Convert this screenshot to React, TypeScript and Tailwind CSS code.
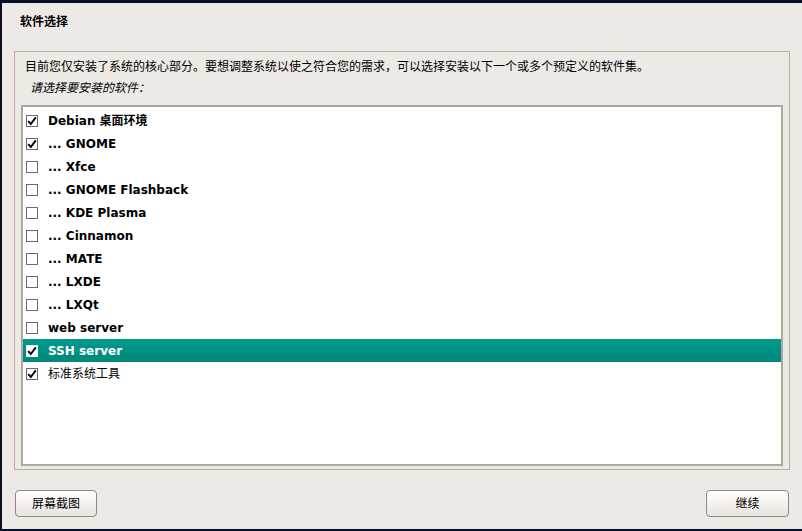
import React from 'react';

const font = { fontFamily: '"DejaVu Sans", "Noto Sans CJK SC", sans-serif' };

const items = [
  { label: 'Debian 桌面环境', checked: true, bold: true },
  { label: '... GNOME', checked: true, bold: true },
  { label: '... Xfce', checked: false, bold: true },
  { label: '... GNOME Flashback', checked: false, bold: true },
  { label: '... KDE Plasma', checked: false, bold: true },
  { label: '... Cinnamon', checked: false, bold: true },
  { label: '... MATE', checked: false, bold: true },
  { label: '... LXDE', checked: false, bold: true },
  { label: '... LXQt', checked: false, bold: true },
  { label: 'web server', checked: false, bold: true },
  { label: 'SSH server', checked: true, bold: true, selected: true },
  { label: '标准系统工具', checked: true, bold: false },
];

function CheckBox({ checked, selected }: { checked: boolean; selected?: boolean }) {
  return (
    <div
      className={`w-[12px] h-[12px] border flex items-center justify-center ${
        selected ? 'bg-white border-[#e6f2ef]' : 'bg-white border-[#6e6962]'
      }`}
    >
      {checked && (
        <svg width="10" height="10" viewBox="0 0 10 10">
          <path d="M1.2 5.2 L3.8 8 L8.8 1.4" fill="none" stroke="#000" strokeWidth="1.9" />
        </svg>
      )}
    </div>
  );
}

export default function App() {
  return (
    <div className="w-[802px] h-[531px] bg-[#0a0d26] pt-[3px] pl-[2px] pb-[2px] overflow-hidden" style={font}>
      <div className="h-full bg-[#edeae5] flex flex-col text-[#000]">
        {/* Title */}
        <div className="h-[48px] pl-[18px] pt-[11px] text-[12px] font-bold leading-[16px]">软件选择</div>

        {/* Group box */}
        <div className="ml-[12px] w-[776px] h-[419px] border border-[#b6afa5] flex flex-col">
          <div className="pl-[10px] pt-[7px] text-[12px] leading-[16px]">
            目前您仅安装了系统的核心部分。要想调整系统以使之符合您的需求，可以选择安装以下一个或多个预定义的软件集。
          </div>
          <div className="pl-[15px] mt-[5px] text-[12px] leading-[16px] italic">请选择要安装的软件：</div>

          <div className="ml-[6px] mt-[9px] w-[762px] h-[361px] bg-white border-2 border-[#aea79c] pt-[2px]">
            {items.map((it) => (
              <div
                key={it.label}
                className={`h-[23px] flex items-center pl-[3px] ${
                  it.selected ? 'bg-gradient-to-b from-[#009b8d] to-[#00877a] text-white' : ''
                }`}
              >
                <CheckBox checked={it.checked} selected={it.selected} />
                <span className={`ml-[10px] text-[12px] leading-[16px] ${it.bold ? 'font-bold' : ''}`}>
                  {it.label}
                </span>
              </div>
            ))}
          </div>
        </div>

        {/* Buttons */}
        <div className="mt-[20px] flex justify-between pl-[13px] pr-[13px]">
          <button className="w-[82px] h-[27px] rounded-[4px] border border-[#8e8982] bg-gradient-to-b from-[#ffffff] to-[#e8e4de] text-[12px]">
            屏幕截图
          </button>
          <button className="w-[83px] h-[27px] rounded-[4px] border border-[#8e8982] bg-gradient-to-b from-[#ffffff] to-[#e8e4de] text-[12px]">
            继续
          </button>
        </div>
      </div>
    </div>
  );
}
